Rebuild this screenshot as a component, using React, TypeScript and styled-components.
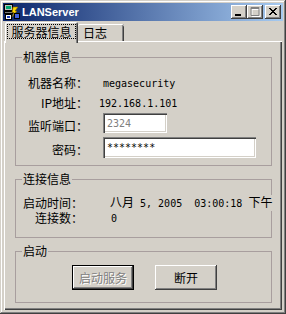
import styled, { createGlobalStyle } from "styled-components";

const GlobalStyle = createGlobalStyle`
  html, body {
    margin: 0;
    padding: 0;
    background: #d4d0c8;
  }
  body {
    font-family: "Noto Sans CJK SC", "Liberation Sans", sans-serif;
    font-size: 12px;
    color: #000;
  }
  * { box-sizing: border-box; }
`;

const Window = styled.div`
  width: 286px;
  height: 314px;
  padding: 3px;
  display: flex;
  flex-direction: column;
  background: #d4d0c8;
  box-shadow: inset -1px -1px #404040, inset 1px 1px #d4d0c8,
    inset -2px -2px #808080, inset 2px 2px #fff;
`;

const TitleBar = styled.div`
  height: 18px;
  flex-shrink: 0;
  display: flex;
  align-items: center;
  padding: 0 2px 0 1px;
  background: linear-gradient(to right, #0a246a, #a6caf0);
`;

const TitleText = styled.span`
  margin-left: 2px;
  color: #fff;
  font-family: "Liberation Sans", Arial, sans-serif;
  font-weight: bold;
  font-size: 11px;
  line-height: 14px;
`;

const CaptionButtons = styled.div`
  margin-left: auto;
  display: flex;
`;

const CapButton = styled.div<{ $gap?: number }>`
  width: 16px;
  height: 14px;
  margin-left: ${p => p.$gap || 0}px;
  background: #d4d0c8;
  box-shadow: inset -1px -1px #404040, inset 1px 1px #fff, inset -2px -2px #808080;
  display: flex;
  svg { display: block; }
`;

const Body = styled.div`
  flex: 1;
  display: flex;
  flex-direction: column;
  padding: 0 1px 1px;
`;

const TabStrip = styled.div`
  height: 20px;
  flex-shrink: 0;
  display: flex;
  align-items: flex-end;
  padding-left: 1px;
  position: relative;
  z-index: 1;
`;

const Tab = styled.div<{ $active?: boolean }>`
  background: #d4d0c8;
  white-space: nowrap;
  border-radius: 2px 2px 0 0;
  ${p =>
    p.$active
      ? `
    width: 73px;
    height: 21px;
    margin-bottom: -2px;
    padding: 2px 0 0 2px;
    box-shadow: inset 1px 1px #fff, inset -1px 0 #404040, inset -2px 0 #808080;
  `
      : `
    width: 46px;
    height: 17px;
    padding-left: 5px;
    line-height: 17px;
    box-shadow: inset 0 1px #fff, inset -1px 0 #404040, inset -2px 0 #808080;
  `}
`;

const FocusRing = styled.span`
  width: 69px;
  height: 15px;
  border: 1px dotted #000;
  display: flex;
  align-items: center;
  justify-content: center;
  line-height: 13px;
`;

const Panel = styled.div`
  flex: 1;
  display: flex;
  flex-direction: column;
  gap: 7px;
  padding: 10px 10px 7px 11px;
  box-shadow: inset 1px 1px #fff, inset -1px -1px #404040, inset -2px -2px #808080;
`;

const Group = styled.fieldset<{ $pad: string }>`
  margin: 0;
  min-width: 0;
  padding: ${p => p.$pad};
  border: 1px solid #a89e9e;
`;

const Legend = styled.legend`
  margin-left: 6px;
  padding: 0 1px;
  font-size: 12px;
  line-height: 12px;
`;

const Row = styled.div<{ $h: number; $label: number; $gap: number; $mt?: number }>`
  height: ${p => p.$h}px;
  margin-top: ${p => p.$mt || 0}px;
  display: grid;
  grid-template-columns: ${p => p.$label}px 1fr;
  column-gap: ${p => p.$gap}px;
  align-items: center;
`;

const Label = styled.span<{ $drop?: number }>`
  text-align: right;
  white-space: nowrap;
  line-height: 14px;
  padding-top: ${p => p.$drop || 0}px;
`;

const Value = styled.span<{ $shift?: number }>`
  margin-left: ${p => p.$shift || 0}px;
  white-space: nowrap;
  line-height: 14px;
  justify-self: start;
  background: #d4d0c8;
`;

const Mono = styled.span`
  font-family: "DejaVu Sans Mono", "Liberation Mono", monospace;
  font-size: 10px;
  white-space: pre;
`;

const TextBox = styled.input<{ $w: number; $h: number; $dim?: boolean }>`
  width: ${p => p.$w}px;
  height: ${p => p.$h}px;
  border: none;
  outline: none;
  margin: 0;
  padding: 0 0 0 4px;
  background: #fff;
  color: ${p => (p.$dim ? "#808080" : "#000")};
  -webkit-text-fill-color: ${p => (p.$dim ? "#808080" : "#000")};
  opacity: 1;
  font-family: "DejaVu Sans Mono", "Liberation Mono", monospace;
  font-size: 10px;
  box-shadow: inset 1px 1px #808080, inset 2px 2px #404040,
    inset -1px -1px #fff, inset -2px -2px #d4d0c8;
`;

const ButtonRow = styled.div`
  display: flex;
  gap: 21px;
  padding-left: 56px;
`;

const PushButton = styled.button<{ $default?: boolean }>`
  width: 62px;
  height: 25px;
  margin: 0;
  padding: 0;
  background: #d4d0c8;
  font-family: "Noto Sans CJK SC", sans-serif;
  font-size: 12px;
  color: #000;
  border: ${p => (p.$default ? "1px solid #000" : "none")};
  box-shadow: inset -1px -1px #404040, inset 1px 1px #fff, inset -2px -2px #808080;
  &:disabled {
    color: #808080;
    text-shadow: 1px 1px #fff;
  }
`;

const AppIcon = () => (
  <svg width="16" height="16" viewBox="0 0 16 16">
    <rect x="0.5" y="0.5" width="8" height="6" fill="#c0c0c0" stroke="#000" />
    <rect x="2" y="2" width="5" height="3" fill="#00a870" />
    <rect x="0.5" y="7.5" width="8" height="2" fill="#808080" stroke="#000" />
    <rect x="1.5" y="10.5" width="6" height="5" fill="#fff" stroke="#000" />
    <rect x="3" y="12" width="3" height="2" fill="#2040c0" />
    <path d="M9 3 L14 3 L11 7 L13 7 L8 13 L10 8.5 L8 8.5 Z" fill="#ffd800" stroke="#806000" strokeWidth="0.6" />
    <rect x="10.5" y="9.5" width="5" height="5" fill="#4060e0" stroke="#000" />
  </svg>
);

const MinGlyph = () => (
  <svg width="16" height="14" viewBox="0 0 16 14">
    <rect x="4" y="9" width="6" height="2" fill="#000" />
  </svg>
);

const MaxGlyph = () => (
  <svg width="16" height="14" viewBox="0 0 16 14">
    <path d="M5 3.5 H13 V11.5 H5 Z M5 4.5 H13" fill="none" stroke="#fff" />
    <path d="M4 2.5 H12 V10.5 H4 Z M4 3.5 H12" fill="none" stroke="#808080" />
  </svg>
);

const CloseGlyph = () => (
  <svg width="16" height="14" viewBox="0 0 16 14">
    <path d="M4 3 L11 10 M5 3 L12 10 M11 3 L4 10 M12 3 L5 10" stroke="#000" strokeWidth="1" />
  </svg>
);

export default function App() {
  return (
    <>
      <GlobalStyle />
      <Window>
        <TitleBar>
          <AppIcon />
          <TitleText>LANServer</TitleText>
          <CaptionButtons>
            <CapButton><MinGlyph /></CapButton>
            <CapButton><MaxGlyph /></CapButton>
            <CapButton $gap={2}><CloseGlyph /></CapButton>
          </CaptionButtons>
        </TitleBar>
        <Body>
          <TabStrip>
            <Tab $active>
              <FocusRing>服务器信息</FocusRing>
            </Tab>
            <Tab>日志</Tab>
          </TabStrip>
          <Panel>
            <Group $pad="9px 0 7px">
              <Legend>机器信息</Legend>
              <Row $h={21} $label={72} $gap={15}>
                <Label>机器名称：</Label>
                <Value><Mono>megasecurity</Mono></Value>
              </Row>
              <Row $h={20} $label={72} $gap={15}>
                <Label>IP地址：</Label>
                <Value $shift={-4}><Mono>192.168.1.101</Mono></Value>
              </Row>
              <Row $h={20} $label={72} $gap={15}>
                <Label $drop={5}>监听端口：</Label>
                <TextBox $w={64} $h={20} $dim disabled defaultValue="2324" />
              </Row>
              <Row $h={21} $label={72} $gap={15} $mt={4}>
                <Label $drop={5}>密码：</Label>
                <TextBox $w={153} $h={21} readOnly defaultValue="********" />
              </Row>
            </Group>
            <Group $pad="10px 0 12px">
              <Legend>连接信息</Legend>
              <Row $h={15} $label={67} $gap={27}>
                <Label>启动时间：</Label>
                <Value>八月<Mono> 5, 2005  03:00:18 </Mono>下午</Value>
              </Row>
              <Row $h={15} $label={67} $gap={27}>
                <Label>连接数：</Label>
                <Value $shift={1}><Mono>0</Mono></Value>
              </Row>
            </Group>
            <Group $pad="8px 0 12px">
              <Legend>启动</Legend>
              <ButtonRow>
                <PushButton $default disabled>启动服务</PushButton>
                <PushButton>断开</PushButton>
              </ButtonRow>
            </Group>
          </Panel>
        </Body>
      </Window>
    </>
  );
}
